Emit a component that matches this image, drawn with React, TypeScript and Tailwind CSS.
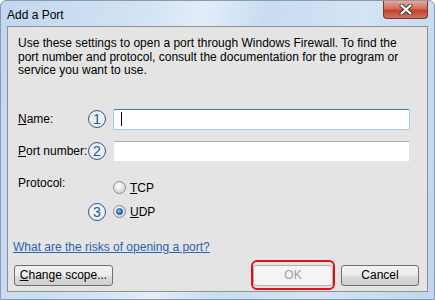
import React from "react";

const font = { fontFamily: '"Liberation Sans", Arial, sans-serif' };

function Step({ n }: { n: string }) {
  return (
    <div className="flex h-[18px] w-[18px] items-center justify-center rounded-full border-[1.5px] border-[#1d5c9b] bg-white/40 text-[14px] leading-none text-[#1d5c9b]">
      {n}
    </div>
  );
}

function Radio({ checked }: { checked?: boolean }) {
  return (
    <div className="flex h-[13px] w-[13px] items-center justify-center rounded-full border border-[#8f8f8f] bg-[radial-gradient(circle_at_40%_35%,#ffffff,#dcdcdc_60%,#c4c4c4)]">
      {checked && (
        <div className="h-[7px] w-[7px] rounded-full border border-[#1d4f83] bg-[radial-gradient(circle_at_40%_35%,#8fd0ff,#1f7ad0_60%,#0d4c8c)]" />
      )}
    </div>
  );
}

function Button({
  children,
  width,
  disabled,
}: {
  children: React.ReactNode;
  width: string;
  disabled?: boolean;
}) {
  return (
    <div
      className={`flex h-[21px] items-center justify-center rounded-[3px] border text-[12px] ${width} ${
        disabled
          ? "border-[#adb2b5] bg-[#f4f4f4] text-[#a0a0a0]"
          : "border-[#707070] bg-[linear-gradient(#f2f2f2,#ebebeb_50%,#dddddd_51%,#cfcfcf)] text-black"
      }`}
    >
      {children}
    </div>
  );
}

export default function App() {
  return (
    <div
      style={font}
      className="flex h-[300px] w-[435px] flex-col overflow-hidden rounded-t-[6px] border border-[#8a9bb0] bg-[linear-gradient(100deg,#c2d7ee_0%,#d3e3f4_30%,#e2edf8_42%,#c8dcf1_55%,#d4e4f4_75%,#c0d6ed_100%)] text-black"
    >
      {/* title bar */}
      <div className="flex h-[25px] shrink-0 items-start">
        <div className="pl-[6px] pt-[5px] text-[12px]">Add a Port</div>
        <div className="ml-auto mr-[6px] flex h-[18px] w-[45px] items-center justify-center rounded-b-[4px] border border-t-0 border-[#6e3a35] bg-[linear-gradient(#e9a89a,#d56b5b_45%,#c1442f_55%,#d2705c)]">
          <svg width="14" height="11" viewBox="0 0 14 11">
            <path d="M2.5 1.5 L11.5 9.5 M11.5 1.5 L2.5 9.5" stroke="#3b3b3b" strokeWidth="4" strokeLinecap="round" />
            <path d="M2.5 1.5 L11.5 9.5 M11.5 1.5 L2.5 9.5" stroke="#ffffff" strokeWidth="2.2" strokeLinecap="round" />
          </svg>
        </div>
      </div>

      {/* client area */}
      <div className="mx-[6px] mb-[7px] flex flex-1 flex-col border border-[#8e8f8f] bg-[#e4e4e4] pt-[10px] text-[12px]">
        <p className="pl-[10px] pr-[14px] leading-[13.5px]">
          Use these settings to open a port through Windows Firewall. To find the
          port number and protocol, consult the documentation for the program or
          service you want to use.
        </p>

        <div className="mt-[31px] flex flex-col gap-[11px] pl-[10px] pr-[17px]">
          <div className="flex items-center">
            <div className="w-[70px]">
              <span className="underline">N</span>ame:
            </div>
            <Step n="1" />
            <div className="ml-[7px] flex h-[21px] flex-1 items-center rounded-[2px] border border-[#a4c9e3] border-t-[#3d7bad] bg-white pl-[7px]">
              <div className="h-[14px] w-px bg-black" />
            </div>
          </div>
          <div className="flex items-center">
            <div className="w-[70px] whitespace-nowrap">
              <span className="underline">P</span>ort number:
            </div>
            <Step n="2" />
            <div className="ml-[7px] h-[21px] flex-1 rounded-[2px] border border-[#e2e3ea] border-t-[#abadb3] bg-white" />
          </div>
        </div>

        <div className="mt-[12px] flex pl-[10px]">
          <div className="w-[95px]">Protocol:</div>
          <div className="mt-[5px] flex items-center gap-[4px]">
            <Radio />
            <span>
              <span className="underline">T</span>CP
            </span>
          </div>
        </div>
        <div className="mt-[6px] flex items-center pl-[80px]">
          <Step n="3" />
          <div className="ml-[7px] flex items-center gap-[4px]">
            <Radio checked />
            <span>
              <span className="underline">U</span>DP
            </span>
          </div>
        </div>

        <div className="mt-[17px] pl-[5px] text-[#2a63b0] underline">
          What are the risks of opening a port?
        </div>

        <div className="mt-[9px] flex items-center pl-[6px] pr-[8px]">
          <Button width="w-[99px]">
            <span>
              <span className="underline">C</span>hange scope...
            </span>
          </Button>
          <div className="relative ml-auto">
            <Button width="w-[80px]" disabled>
              OK
            </Button>
            <div className="absolute -bottom-[4px] -left-[2px] -right-[2px] -top-[5px] rounded-[6px] border-2 border-[#e0101a]" />
          </div>
          <div className="ml-[8px]">
            <Button width="w-[78px]">Cancel</Button>
          </div>
        </div>
      </div>
    </div>
  );
}
